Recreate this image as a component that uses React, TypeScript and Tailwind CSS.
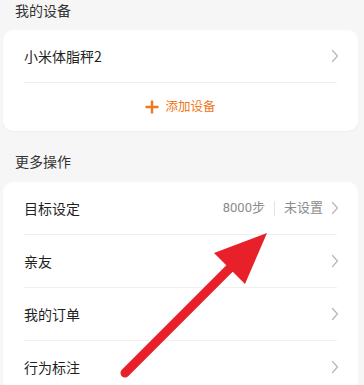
import React from "react";

const ChevronRight = () => (
  <svg width="8" height="14" viewBox="0 0 8 14" fill="none" className="shrink-0">
    <path d="M1.5 1.5L6.5 7L1.5 12.5" stroke="#b9b9b9" strokeWidth="1.3" strokeLinecap="round" strokeLinejoin="round" />
  </svg>
);

const Divider = () => <div className="h-px bg-[#f0f0f0] mx-[21px]" />;

interface RowProps {
  label: string;
  right?: React.ReactNode;
}

const Row: React.FC<RowProps> = ({ label, right }) => (
  <div className="h-[52px] flex items-center justify-between pl-[21px] pr-[19px]">
    <span className="text-[14px] text-[#1f1f1f]">{label}</span>
    <div className="flex items-center gap-[8px]">
      {right}
      <ChevronRight />
    </div>
  </div>
);

export default function App() {
  return (
    <div className="relative w-[364px] h-[385px] overflow-hidden bg-[#f6f6f6] font-['Noto_Sans_CJK_SC',sans-serif]">
      <div className="pl-[15px] h-[20px] leading-[20px] text-[14px] text-[#333]">我的设备</div>

      <div className="mt-[10px] mx-[3px] w-[355px] bg-white rounded-[10px] shadow-[0_1px_2px_rgba(0,0,0,0.04)]">
        <Row label="小米体脂秤2" />
        <Divider />
        <div className="h-[48px] flex items-center justify-center gap-[6px] pb-[1px]">
          <svg width="14" height="14" viewBox="0 0 14 14">
            <path d="M7 0.5V13.5M0.5 7H13.5" stroke="#f07620" strokeWidth="2.4" />
          </svg>
          <span className="text-[12.5px] text-[#f07620]">添加设备</span>
        </div>
      </div>

      <div className="pl-[15px] pt-[20px] pb-[11px] leading-[20px] text-[14px] text-[#333]">更多操作</div>

      <div className="mx-[3px] w-[355px] bg-white rounded-[10px]">
        <Row
          label="目标设定"
          right={
            <div className="flex items-center text-[13px] text-[#8c8c8c] font-['Roboto','Noto_Sans_CJK_SC',sans-serif]">
              <span>8000步</span>
              <span className="mx-[9px] w-px h-[15px] bg-[#e2e2e2]" />
              <span>未设置</span>
            </div>
          }
        />
        <Divider />
        <Row label="亲友" />
        <Divider />
        <Row label="我的订单" />
        <Divider />
        <Row label="行为标注" />
      </div>

      <svg className="absolute inset-0 pointer-events-none" width="364" height="385" viewBox="0 0 364 385">
        <line x1="125" y1="373" x2="234" y2="264" stroke="#e8202a" strokeWidth="9" strokeLinecap="round" />
        <polygon points="267,233 214,253 245,284" fill="#e8202a" />
      </svg>
    </div>
  );
}
